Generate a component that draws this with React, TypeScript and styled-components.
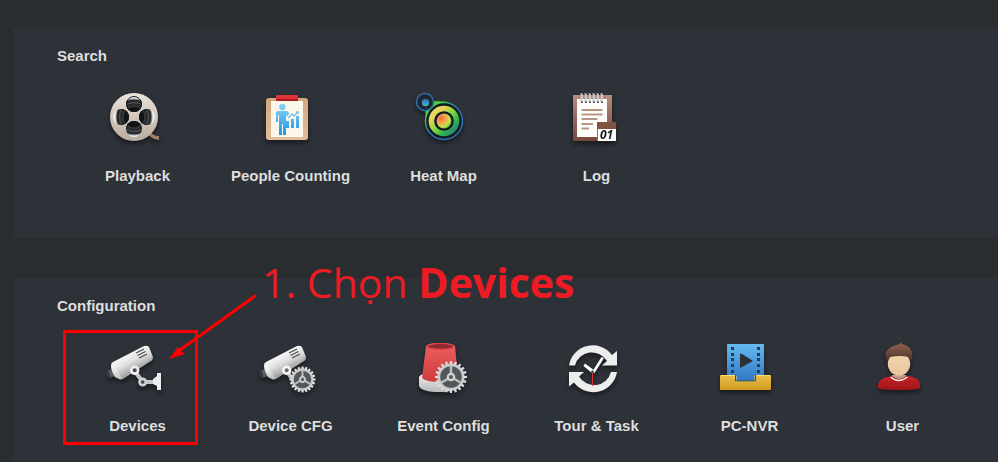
import React from "react";
import styled, { createGlobalStyle } from "styled-components";

const GlobalStyle = createGlobalStyle`
  * { box-sizing: border-box; }
  body {
    margin: 0;
    background: #2a2d30;
    color: #dedede;
    font-family: "Liberation Sans", Arial, sans-serif;
  }
`;

const Page = styled.main`
  display: flex;
  flex-direction: column;
  gap: 40px;
  height: 100vh;
  padding: 28px 0 0 13px;
  overflow: hidden;
`;

const Panel = styled.section`
  flex: none;
  padding: 18px 0 52px;
  background: #2d3138;
`;

const Title = styled.h2`
  margin: 0 0 20px 44px;
  font-size: 15px;
  line-height: 20px;
  font-weight: bold;
`;

const Tiles = styled.ul`
  display: grid;
  grid-template-columns: repeat(auto-fill, 153px);
  margin: 0;
  padding: 0 0 0 48px;
  list-style: none;
`;

const Tile = styled.li`
  position: relative;
`;

const TileButton = styled.button`
  display: flex;
  flex-direction: column;
  align-items: center;
  gap: 15px;
  width: 100%;
  padding: 0;
  border: 0;
  background: none;
  color: inherit;
  font: bold 15px/20px "Liberation Sans", Arial, sans-serif;
  white-space: nowrap;
  cursor: pointer;
`;

const Icon = styled.svg`
  display: block;
  width: 65px;
  height: 65px;
  overflow: visible;
  filter: drop-shadow(0 3px 2px rgba(0, 0, 0, 0.45));
`;

const Highlight = styled.div`
  position: absolute;
  top: -6px;
  left: 2px;
  width: 135px;
  height: 115px;
  border: 3px solid #fe0000;
  pointer-events: none;
`;

const Arrow = styled.svg`
  position: absolute;
  top: -46px;
  left: 99px;
  width: 100px;
  height: 80px;
  pointer-events: none;
`;

const Note = styled.p`
  position: absolute;
  top: -80px;
  left: 201px;
  margin: 0;
  color: #ed1c24;
  font-family: "Open Sans", "Noto Sans", sans-serif;
  font-size: 41px;
  line-height: 52px;
  white-space: nowrap;
  pointer-events: none;
`;

const Drawing = ({ children }: { children: React.ReactNode }) => (
  <Icon viewBox="0 0 65 65" aria-hidden="true">{children}</Icon>
);

const Gradient = ({ id, from, to }: { id: string; from: string; to: string }) => (
  <linearGradient id={id} x1="0" y1="0" x2="0" y2="1">
    <stop stopColor={from} />
    <stop offset="1" stopColor={to} />
  </linearGradient>
);

const Playback = () => (
  <Drawing>
    <defs>
      <Gradient id="reel" from="#ece3da" to="#b9aca0" />
      <clipPath id="holeTop"><circle cx="29" cy="18" r="8" /></clipPath>
      <clipPath id="holeLeft"><circle cx="16" cy="31" r="8" /></clipPath>
      <clipPath id="holeRight"><circle cx="42" cy="31" r="8" /></clipPath>
      <clipPath id="holeBottom"><circle cx="29" cy="43" r="8" /></clipPath>
    </defs>
    <path d="M44 45q4 5 10 5v4q-8-1-12-7z" fill="#a27d69" />
    <circle cx="29" cy="31" r="24" fill="url(#reel)" />
    {["Top", "Left", "Right", "Bottom"].map((side) => (
      <g key={side} clipPath={`url(#hole${side})`}>
        <circle cx="29" cy="31" r="24" fill="#eeeeee" />
        <circle cx="29" cy="31" r="18" fill="#26282a" stroke="#9a9a9a" />
        <circle cx="29" cy="31" r="14.500" fill="none" stroke="#484a4c" strokeWidth="1.500" />
        <circle cx="29" cy="31" r="11" fill="#111213" stroke="#38393b" strokeWidth="1.500" />
      </g>
    ))}
    <g fill="none" stroke="#191a1c">
      <circle cx="29" cy="18" r="7.500" />
      <path d="M16 23.500a7.500 7.500 0 0 1 0 15M42 23.500a7.500 7.500 0 0 0 0 15M21.500 43a7.500 7.500 0 0 1 15 0" />
    </g>
  </Drawing>
);

const PeopleCounting = () => (
  <Drawing>
    <defs>
      <Gradient id="board" from="#d3a681" to="#e3bd9c" />
      <linearGradient id="people" gradientUnits="userSpaceOnUse" x1="0" y1="18" x2="0" y2="48">
        <stop stopColor="#8cd3f4" /><stop offset="1" stopColor="#199ae7" />
      </linearGradient>
    </defs>
    <rect x="8" y="12" width="42" height="42" rx="3" fill="url(#board)" />
    <rect x="13" y="15" width="32" height="36" fill="#fdf6ea" />
    <path d="M18 10q0-1 1-1h20q1 0 1 1v5H18z" fill="#df3338" />
    <path d="M18 13h22v2H18z" fill="#a91e22" />
    <g fill="url(#people)">
      <circle cx="24.4" cy="21" r="3.2" />
      <path d="M20 25h8q3 0 3 3l-2 2h-1v19h-3V38h-1v11h-3V29h-1v7h-2v-9q0-2 2-2z" />
      <path d="M28 35h3v7h-3zM33 33h3v9h-3zM38 30h3v12h-3z" />
    </g>
    <path d="M30 32l4-4 2 2 4-4" fill="none" stroke="#70c5ed" strokeWidth="1.3" />
    <circle cx="39.5" cy="26.5" r="1.4" fill="#70c5ed" />
  </Drawing>
);

const HeatMap = () => (
  <Drawing>
    <defs>
      <linearGradient id="heatRing" x1="0" y1="0" x2="1" y2="1">
        <stop stopColor="#e5e36d" /><stop offset=".25" stopColor="#e6cf55" /><stop offset=".5" stopColor="#79d83f" /><stop offset=".7" stopColor="#37b94c" /><stop offset="1" stopColor="#1d6f80" />
      </linearGradient>
      <radialGradient id="heatCore" cx=".28" cy=".3" r=".85">
        <stop stopColor="#f66843" /><stop offset=".4" stopColor="#efaa4b" /><stop offset=".7" stopColor="#c7e44c" /><stop offset="1" stopColor="#49b536" />
      </radialGradient>
      <linearGradient id="heatEdge" x1="0" y1="0" x2="1" y2="1">
        <stop stopColor="#a0df38" /><stop offset=".2" stopColor="#43c843" /><stop offset=".48" stopColor="#2879b8" /><stop offset="1" stopColor="#2d6cb6" />
      </linearGradient>
      <Gradient id="heatDot" from="#2865b1" to="#46bfc5" />
    </defs>
    <path d="M22 15q7 0 15 1q-13 3-22 21q0-8-1-13q7-2 8-9z" fill="#48c93b" />
    <circle cx="33" cy="35" r="18.5" fill="#111b20" stroke="url(#heatEdge)" strokeWidth="1.5" />
    <circle cx="33" cy="35" r="12.6" fill="none" stroke="url(#heatRing)" strokeWidth="5.5" />
    <circle cx="33" cy="35" r="7.4" fill="url(#heatCore)" />
    <circle cx="14" cy="16" r="8.5" fill="#20262d" stroke="#2b70ad" strokeWidth="1.5" />
    <circle cx="14.5" cy="16.5" r="3.7" fill="url(#heatDot)" />
  </Drawing>
);

const Log = () => (
  <Drawing>
    <defs><Gradient id="wood" from="#b68c7b" to="#74493b" /></defs>
    <rect x="9" y="9" width="39" height="46" fill="url(#wood)" />
    <rect x="13" y="13" width="30" height="38" fill="#fffefd" />
    {[17, 21, 25, 29, 33, 37].map((x) => (
      <g key={x}>
        <rect x={x} y="15" width="2" height="2" fill="#53575b" />
        <path d={`M${x} 16V7M${x + 1} 16V7`} fill="none" stroke="#aeb1b4" />
        <path d={`M${x + 1} 8v7`} stroke="#e6e6e6" />
      </g>
    ))}
    <path d="M17.5 24h21M17.5 28.5h21M17.5 33h16M17.5 38H29M17.5 42.5H25" stroke="#b89580" strokeWidth="2" />
    <rect x="34" y="36" width="18" height="19" fill="#fff" />
    <rect x="33" y="36" width="19" height="7" fill="#805241" />
    <path d="M33 43v12h1V43z" fill="#747b83" />
    <text x="36" y="53" fill="#15191c" fontFamily="Open Sans, sans-serif" fontSize="12" fontWeight="bold" fontStyle="italic">01</text>
  </Drawing>
);

const Camera = ({ id }: { id: string }) => (
  <>
    <defs>
      <linearGradient id={id} gradientUnits="userSpaceOnUse" x1="21" y1="18" x2="31" y2="37">
        <stop stopColor="#fafafa" /><stop offset=".45" stopColor="#dedede" /><stop offset="1" stopColor="#929292" />
      </linearGradient>
    </defs>
    <path d="M2 35l5-2 3 7-6 2q-3-3-2-7z" fill="#5b5d60" />
    <path d="M1.5 36l2-1 2 6-2 1z" fill="#323438" />
    <path d="M8 26L39 10q3-1 5 1l4 10q0 3-2 4L18 43q-3 1-4 0l-4-2q-4-7-4-11 0-3 2-4z" fill={`url(#${id})`} />
    <path d="M6 29q0-2 2-3l9 16q-1 2-3 1l-4-2q-4-7-4-12z" fill="#fff" fillOpacity=".3" />
    <path d="M31 17l8-4M32.5 19.5l8-4M34 22l8-4" stroke="#454545" strokeWidth="1.1" />
  </>
);

const Devices = () => (
  <Drawing>
    <Camera id="cameraBody" />
    <path d="M31 37l7 9h14" fill="none" stroke="#c4c6c7" strokeWidth="4" />
    <path d="M48 43l4-3v-3h4v17h-4v-4l-4-2z" fill="#ededed" />
    <g fill="#48494d" stroke="#eee" strokeWidth="2.7">
      <circle cx="29.7" cy="34.3" r="3.4" />
      <circle cx="37.7" cy="46" r="3.2" stroke="#cfd0d1" />
    </g>
  </Drawing>
);

const Gear = ({ x, y, r, teeth }: { x: number; y: number; r: number; teeth: number }) => (
  <g transform={`translate(${x} ${y})`}>
    <circle r={r * 0.72} fill="#55585b" />
    <circle r={r * 0.76} fill="none" stroke="#c9caca" strokeWidth={r * 0.17} />
    {Array.from({ length: teeth }, (_, i) => (
      <path key={i} transform={`rotate(${(i * 360) / teeth})`} d={`M-1.3 ${-r * 0.8}L-1 ${-r}h2L1.3 ${-r * 0.8}z`} fill="#dcdddd" />
    ))}
    <path d={`M0 0V${-r * 0.7}M0 0L${r * 0.62} ${r * 0.36}M0 0L${-r * 0.62} ${r * 0.36}`} stroke="#bcbdbe" strokeWidth={r * 0.15} />
    <circle r={r * 0.2} fill="#595b5d" stroke="#d1d2d2" strokeWidth={r * 0.14} />
  </g>
);

const DeviceConfig = () => (
  <Drawing>
    <Camera id="configBody" />
    <path d="M30 37l6 9" stroke="#b8b9bb" strokeWidth="4" />
    <circle cx="28.7" cy="34.3" r="3.4" fill="#68696b" stroke="#f5f5f5" strokeWidth="2.7" />
    <Gear x={44.5} y={43.5} r={13} teeth={20} />
  </Drawing>
);

const EventConfig = () => (
  <Drawing>
    <defs>
      <Gradient id="lamp" from="#ed6260" to="#ce393d" />
      <Gradient id="lampBase" from="#efeff0" to="#b7b8ba" />
    </defs>
    <path d="M8 41q3-4 8-3h25q7 0 7 5v7q-3 6-20 6-17 0-20-6z" fill="url(#lampBase)" />
    <path d="M11 42l4-32q2-3 14-3t15 3l3 32q-3 4-18 4-14 0-18-4z" fill="url(#lamp)" />
    <ellipse cx="29.5" cy="10.500" rx="13" ry="3" fill="#8c2c30" stroke="#ec4245" />
    <path d="M19 11q10 3 21 0v2H19z" fill="#c94345" />
    <Gear x={40} y={41} r={16} teeth={20} />
  </Drawing>
);

const TourTask = () => (
  <Drawing>
    <g fill="#ededed">
      <path d="M5 29.500a24 24 0 0 1 43-10.500l5-4v14.500H38l5-4.500a17.500 17.500 0 0 0-32 4.500z" />
      <path d="M53 36a24 24 0 0 1-43 10.500l-5 4V36h15l-5 4.500a17.500 17.500 0 0 0 32-4.500z" />
    </g>
    <path d="M28 36L37.500 21l2.500 1-9.500 15zM28 37l-8.500-7 1.500-2.500 9.500 7z" fill="#fff" />
    <path d="M28.500 36v14" stroke="#d8343a" />
    <circle cx="28.500" cy="35.700" r="1.500" fill="#54585d" />
  </Drawing>
);

const PcNvr = () => (
  <Drawing>
    <defs>
      <Gradient id="video" from="#65baf1" to="#2e74c4" />
      <Gradient id="tray" from="#eac04a" to="#cf9b20" />
    </defs>
    <rect x="10" y="8" width="37" height="39" rx="1" fill="url(#video)" />
    {[11, 17, 22, 28, 34].map((y) => <path key={y} d={`M14 ${y}h3v3h-3zM40 ${y}h3v3h-3z`} fill="#293c55" />)}
    <path d="M23 18q1-1 2 0l11 7-11 6q-1 1-2 0z" fill="#2c3035" />
    <path d="M3 40q0-1 1-1h15v6h19v-6h15q1 0 1 1v13q0 1-1 1H4q-1 0-1-1z" fill="url(#tray)" />
    <path d="M4 39.500h15v6h19v-6h15" fill="none" stroke="#ffdc73" />
    <path d="M18.500 39v6h20v-6" fill="none" stroke="#4d4a35" />
  </Drawing>
);

const User = () => (
  <Drawing>
    <defs>
      <Gradient id="hair" from="#956650" to="#473027" />
      <Gradient id="face" from="#f3d4af" to="#e9c59c" />
      <Gradient id="shirt" from="#c92427" to="#9d1519" />
    </defs>
    <path d="M22 39h14v8H22z" fill="#b7a092" />
    <path d="M20 40.500l2-.5q7 6 14 0 14 1 14 9v3q-4 2-21 2T8 52v-3q1-7 12-8.500z" fill="url(#shirt)" />
    <path d="M20.500 41q8 7 17 0" fill="none" stroke="#f5eee8" strokeWidth="1.500" />
    <ellipse cx="29" cy="28" rx="11.200" ry="11.500" fill="url(#face)" />
    <path d="M17 26q-2-6-1-10 3-6 14-8V6l2 2q8 2 10 8 1 5-1 10l-2-5q-9-2-19 0z" fill="url(#hair)" />
  </Drawing>
);

type TileData = { label: string; Picture: React.ComponentType; marked?: boolean };

const searchTiles: TileData[] = [
  { label: "Playback", Picture: Playback },
  { label: "People Counting", Picture: PeopleCounting },
  { label: "Heat Map", Picture: HeatMap },
  { label: "Log", Picture: Log },
];

const configTiles: TileData[] = [
  { label: "Devices", Picture: Devices, marked: true },
  { label: "Device CFG", Picture: DeviceConfig },
  { label: "Event Config", Picture: EventConfig },
  { label: "Tour & Task", Picture: TourTask },
  { label: "PC-NVR", Picture: PcNvr },
  { label: "User", Picture: User },
];

const Section = ({ title, tiles }: { title: string; tiles: TileData[] }) => (
  <Panel aria-label={title}>
    <Title>{title}</Title>
    <Tiles>
      {tiles.map(({ label, Picture, marked }) => (
        <Tile key={label}>
          <TileButton type="button">
            <Picture />
            {label}
          </TileButton>
          {marked && (
            <>
              <Highlight />
              <Arrow viewBox="0 0 100 80" aria-hidden="true">
                <path d="M95 6L20 60" stroke="#fe0000" strokeWidth="3" strokeLinecap="round" />
                <path d="M9 69l9-12 3 4 4 3z" fill="#fe0000" />
              </Arrow>
              <Note>1. Chọn <strong>Devices</strong></Note>
            </>
          )}
        </Tile>
      ))}
    </Tiles>
  </Panel>
);

export default function App() {
  return (
    <>
      <GlobalStyle />
      <Page>
        <Section title="Search" tiles={searchTiles} />
        <Section title="Configuration" tiles={configTiles} />
      </Page>
    </>
  );
}
